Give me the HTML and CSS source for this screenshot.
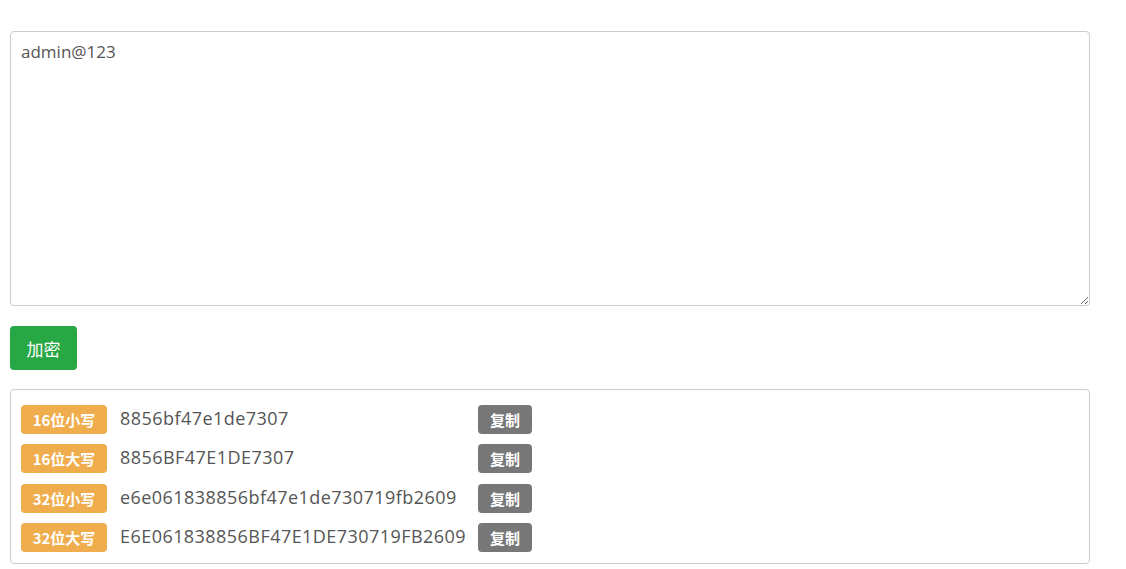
FILE: index.html
```html
<!DOCTYPE html>
<html lang="zh-CN">
<head>
    <meta charset="UTF-8">
    <meta name="viewport" content="width=device-width, initial-scale=1.0">
    <title>MD5加密</title>
    <link rel="stylesheet" href="styles.css">
</head>
<body>
    <div class="container">
        <textarea id="source" class="source">admin@123</textarea>
        <button class="btn-encrypt">加密</button>
        <div class="result">
            <div class="row">
                <span class="badge">16位小写</span>
                <span class="hash">8856bf47e1de7307</span>
                <button class="btn-copy">复制</button>
            </div>
            <div class="row">
                <span class="badge">16位大写</span>
                <span class="hash">8856BF47E1DE7307</span>
                <button class="btn-copy">复制</button>
            </div>
            <div class="row">
                <span class="badge">32位小写</span>
                <span class="hash">e6e061838856bf47e1de730719fb2609</span>
                <button class="btn-copy">复制</button>
            </div>
            <div class="row">
                <span class="badge">32位大写</span>
                <span class="hash">E6E061838856BF47E1DE730719FB2609</span>
                <button class="btn-copy">复制</button>
            </div>
        </div>
    </div>
</body>
</html>
```

FILE: styles.css
```css
body {
    margin: 0;
    padding: 31px 10px 0;
    font-family: "Open Sans", "Noto Sans CJK SC", sans-serif;
    color: #555;
    background: #fff;
}
.container {
    width: 1080px;
}
.source {
    display: block;
    width: 100%;
    height: 275px;
    box-sizing: border-box;
    padding: 9px 10px;
    border: 1px solid #ccc;
    border-radius: 4px;
    font-family: "Open Sans", "Noto Sans CJK SC", sans-serif;
    font-size: 17px;
    line-height: 22px;
    color: #555;
    resize: vertical;
    outline: none;
}
.btn-encrypt {
    display: block;
    margin: 20px 0 19px;
    width: 67px;
    height: 44px;
    border: none;
    border-radius: 4px;
    background: #28a745;
    color: #fff;
    font-family: "Noto Sans CJK SC", sans-serif;
    font-size: 17px;
    cursor: pointer;
}
.result {
    border: 1px solid #ccc;
    border-radius: 4px;
    padding: 15px 10px 11px;
    display: grid;
    grid-template-columns: auto auto auto;
    justify-content: start;
    row-gap: 10.4px;
}
.row {
    display: contents;
}
.badge {
    display: flex;
    align-items: center;
    justify-content: center;
    width: 86px;
    height: 29px;
    border-radius: 4px;
    background: #f0ad4e;
    color: #fff;
    font-family: "Noto Sans CJK SC", sans-serif;
    font-weight: 700;
    font-size: 15px;
}
.hash {
    display: flex;
    align-items: center;
    padding: 0 12px 3px 13px;
    font-size: 18px;
    letter-spacing: 0.45px;
    color: #555;
}
.btn-copy {
    width: 54px;
    height: 29px;
    border: none;
    border-radius: 4px;
    background: #777;
    color: #fff;
    font-family: "Noto Sans CJK SC", sans-serif;
    font-weight: 700;
    font-size: 15px;
    padding: 0;
    cursor: pointer;
}
```
